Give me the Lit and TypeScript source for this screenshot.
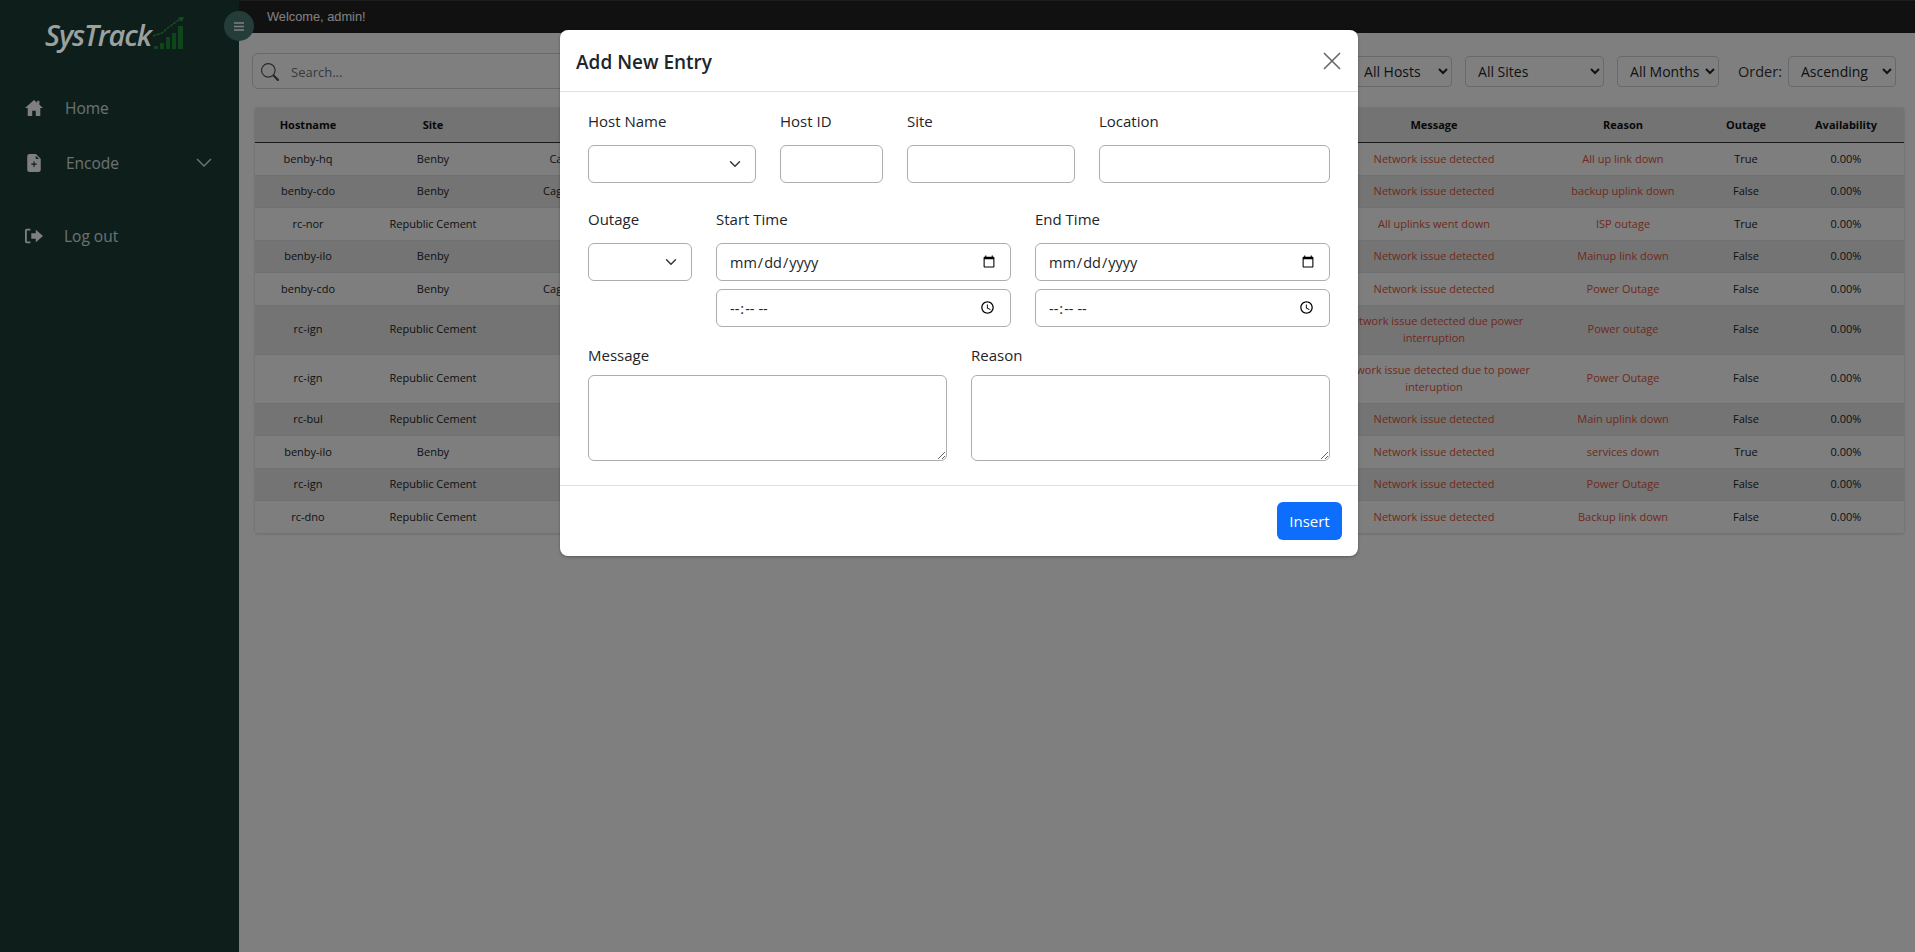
import { html, css, LitElement } from 'lit';
import { customElement } from 'lit/decorators.js';
import { map } from 'lit/directives/map.js';

interface Row {
  host: string;
  site: string;
  location: string;
  message: string;
  reason: string;
  outage: string;
}

const NET = 'Network issue detected';
const RC = 'Republic Cement';

const ROWS: Row[] = [
  { host: 'benby-hq', site: 'Benby', location: 'Caloocan City', message: NET, reason: 'All up link down', outage: 'True' },
  { host: 'benby-cdo', site: 'Benby', location: 'Cagayan de Oro', message: NET, reason: 'backup uplink down', outage: 'False' },
  { host: 'rc-nor', site: RC, location: 'Bulacan', message: 'All uplinks went down', reason: 'ISP outage', outage: 'True' },
  { host: 'benby-ilo', site: 'Benby', location: 'Iloilo', message: NET, reason: 'Mainup link down', outage: 'False' },
  { host: 'benby-cdo', site: 'Benby', location: 'Cagayan de Oro', message: NET, reason: 'Power Outage', outage: 'False' },
  { host: 'rc-ign', site: RC, location: 'Iligan', message: 'Network issue detected due power interruption', reason: 'Power outage', outage: 'False' },
  { host: 'rc-ign', site: RC, location: 'Iligan', message: 'Network issue detected due to power interuption', reason: 'Power Outage', outage: 'False' },
  { host: 'rc-bul', site: RC, location: 'Bulacan', message: NET, reason: 'Main uplink down', outage: 'False' },
  { host: 'benby-ilo', site: 'Benby', location: 'Iloilo', message: NET, reason: 'services down', outage: 'True' },
  { host: 'rc-ign', site: RC, location: 'Iligan', message: NET, reason: 'Power Outage', outage: 'False' },
  { host: 'rc-dno', site: RC, location: 'Danao', message: NET, reason: 'Backup link down', outage: 'False' },
];

const COLUMNS: [string, number][] = [
  ['Hostname', 106],
  ['Site', 144],
  ['Location', 158],
  ['Host ID', 221],
  ['Start Time', 221],
  ['End Time', 221],
  ['Message', 216],
  ['Reason', 162],
  ['Outage', 84],
  ['Availability', 116],
];

@customElement('app-root')
export class AppRoot extends LitElement {
  static styles = css`
    :host {
      display: block;
      position: relative;
      height: 100vh;
      overflow: hidden;
      font-family: "Open Sans", "Noto Sans", sans-serif;
      color: #212529;
      background: #fff;
    }

    .layout {
      display: flex;
      height: 100%;
    }

    /* sidebar */
    .sidebar {
      width: 239px;
      flex: none;
      background: #1c3d36;
      color: #fff;
      box-sizing: border-box;
      padding-top: 16px;
    }

    .logo {
      display: flex;
      align-items: flex-end;
      height: 38px;
      padding-left: 45px;
    }

    /* the logo stays brighter than the dimmed page around it */
    .logo-text {
      position: relative;
      z-index: 1;
      font-size: 29px;
      line-height: 38px;
      font-weight: 600;
      font-style: italic;
      letter-spacing: -1.1px;
      color: #9ca1a0;
    }

    .logo svg {
      margin: 0 0 5px 1px;
    }

    .menu {
      margin-top: 42px;
    }

    .menu-item {
      display: flex;
      align-items: center;
      height: 24px;
      padding-left: 25px;
      font-size: 15.5px;
      color: #d8e3e0;
    }

    .menu-item + .menu-item {
      margin-top: 31px;
    }

    .menu-item.logout {
      margin-top: 49px;
    }

    .menu-item svg.icon {
      width: 18px;
      height: 18px;
      flex: none;
      fill: #fff;
    }

    .menu-item span {
      margin-left: 22px;
    }

    .menu-item.logout span {
      margin-left: 21px;
    }

    .menu-item.encode span {
      margin-left: 23px;
    }

    .menu-item svg.chev {
      margin-left: auto;
      margin-right: 27px;
    }

    .toggle {
      position: absolute;
      left: 224px;
      top: 11px;
      width: 30px;
      height: 30px;
      border-radius: 50%;
      background: #4a7a70;
      display: flex;
      align-items: center;
      justify-content: center;
    }

    /* main */
    .main {
      flex: 1;
      min-width: 0;
      display: flex;
      flex-direction: column;
    }

    .topbar {
      height: 32px;
      flex: none;
      border-top: 1px solid #3a3a3a;
      background: #222;
      color: #fff;
      font-family: "Liberation Sans", Arial, sans-serif;
      font-size: 12.8px;
      line-height: 31px;
      padding-left: 28px;
    }

    .content {
      padding: 20px 19px 0 13px;
    }

    .toolbar {
      display: flex;
      align-items: center;
    }

    .search {
      flex: 1;
      height: 36px;
      box-sizing: border-box;
      border: 1px solid #ced4da;
      border-radius: 6px;
      display: flex;
      align-items: center;
      padding: 1px 0 0 8px;
      margin-right: 13px;
      font-size: 13px;
      color: #6c757d;
    }

    .search svg {
      width: 18px;
      height: 18px;
      fill: #555;
      margin-right: 12px;
    }

    .filter {
      height: 31px;
      box-sizing: border-box;
      border: 1px solid #ced4da;
      border-radius: 4px;
      background-color: #fff;
      font-family: inherit;
      font-size: 14px;
      color: #212529;
      padding: 0 0 0 8px;
      margin-left: 13px;
    }

    .filter.hosts { width: 101px; margin-left: 0; }
    .filter.sites { width: 139px; }
    .filter.months { width: 102px; }
    .filter.order { width: 108px; margin-left: 6px; }

    .order-label {
      margin-left: 19px;
      font-size: 14.5px;
      color: #333;
    }

    .card {
      margin: 19px -8px 0 3px;
      box-shadow: 0 0 3px rgba(0, 0, 0, 0.2);
      border-radius: 3px;
    }

    table {
      width: 100%;
      table-layout: fixed;
      border-collapse: collapse;
      font-size: 11px;
      line-height: 16.5px;
      text-align: center;
    }

    th {
      font-weight: 700;
      color: #111;
      background: #e6e6e6;
      padding: 9px 8px 8.5px;
      border-bottom: 1px solid #333;
    }

    td {
      padding: 7.5px 8px;
      background: #fcfcfc;
      border-bottom: 1px solid #dee2e6;
      vertical-align: middle;
    }

    tbody tr:nth-child(even) td {
      background: #e8e8e8;
    }

    td.alert {
      color: #e2533a;
    }

    /* modal */
    .backdrop {
      position: absolute;
      inset: 0;
      background: rgba(0, 0, 0, 0.5);
    }

    .modal {
      position: absolute;
      left: 560px;
      top: 30px;
      width: 798px;
      background: #fff;
      border-radius: 8px;
      box-shadow: 0 1px 3px rgba(0, 0, 0, 0.3);
    }

    .modal-header {
      display: flex;
      align-items: center;
      justify-content: space-between;
      height: 61px;
      padding: 0 16px;
      border-bottom: 1px solid #dee2e6;
    }

    .modal-title {
      font-size: 19px;
      font-weight: 600;
      padding-top: 2px;
    }

    .modal-body {
      padding: 18px 28px 24px 28px;
    }

    .form-row {
      display: flex;
      gap: 24px;
    }

    .form-row + .form-row {
      margin-top: 25px;
    }

    .form-row.third {
      margin-top: 17px;
    }

    .field {
      display: flex;
      flex-direction: column;
    }

    label {
      font-size: 15px;
      line-height: 22px;
      margin-bottom: 13px;
    }

    .third label {
      margin-bottom: 9px;
    }

    .w-host { width: 168px; }
    .w-id { width: 103px; }
    .w-site { width: 168px; }
    .w-loc { width: 231px; }
    .w-outage { width: 104px; }
    .w-start { width: 295px; }
    .w-end { width: 295px; }
    .w-msg { width: 359px; }
    .w-reason { width: 359px; }

    .control {
      display: block;
      width: 100%;
      height: 38px;
      box-sizing: border-box;
      border: 1px solid #adadad;
      border-radius: 6px;
      background: #fff;
      font-family: inherit;
      font-size: 14.5px;
      color: #212529;
      padding: 0 12px;
      margin: 0;
    }

    .control + .control {
      margin-top: 8px;
    }

    select.control {
      appearance: none;
      background-image: url("data:image/svg+xml,%3csvg xmlns='http://www.w3.org/2000/svg' viewBox='0 0 16 16'%3e%3cpath fill='none' stroke='%23343a40' stroke-linecap='round' stroke-linejoin='round' stroke-width='2' d='m2 5 6 6 6-6'/%3e%3c/svg%3e");
      background-repeat: no-repeat;
      background-position: right 12px center;
      background-size: 16px 12px;
    }

    textarea.control {
      height: 86px;
      padding: 6px 12px;
    }

    .modal-footer {
      display: flex;
      justify-content: flex-end;
      padding: 16px;
      border-top: 1px solid #dee2e6;
    }

    .btn {
      width: 65px;
      height: 38px;
      border: none;
      border-radius: 6px;
      background: #0d6efd;
      color: #fff;
      font-family: inherit;
      font-size: 15px;
      padding: 0;
    }
  `;

  private renderSidebar() {
    return html`
      <aside class="sidebar">
        <div class="logo">
          <span class="logo-text">SysTrack</span>
          <svg width="34" height="32" viewBox="0 0 34 32">
            <path fill="#1c8a34" d="M2 29h4v3H2zM8 26h4v6H8zM14 20h4v12h-4zM20 16h4v16h-4zM26 9h5v23h-5z" />
            <path fill="none" stroke="#2f9c44" stroke-width="1.5" stroke-dasharray="3 1" d="M1 19l9-3 7-6 11-8" />
            <path fill="#2f9c44" d="M32 0l-6 .5 3.5 4.5z" />
          </svg>
        </div>
        <nav class="menu">
          <div class="menu-item">
            <svg class="icon" viewBox="0 0 20 18"><path d="M10 0 0 9h3v9h5v-6h4v6h5V9h3l-4-3.6V1h-2.5v2.1z" /></svg>
            <span>Home</span>
          </div>
          <div class="menu-item encode">
            <svg class="icon" viewBox="0 0 16 16" style="height:22px"><path d="M9.293 0H4a2 2 0 0 0-2 2v12a2 2 0 0 0 2 2h8a2 2 0 0 0 2-2V4.707A1 1 0 0 0 13.707 4L10 .293A1 1 0 0 0 9.293 0zM9.5 3.5v-2l3 3h-2a1 1 0 0 1-1-1zM8.5 7v1.5H10a.5.5 0 0 1 0 1H8.5V11a.5.5 0 0 1-1 0V9.5H6a.5.5 0 0 1 0-1h1.5V7a.5.5 0 0 1 1 0z" /></svg>
            <span>Encode</span>
            <svg class="chev" width="16" height="10" viewBox="0 0 16 10"><path d="M1 1l7 7 7-7" fill="none" stroke="#d8e3e0" stroke-width="1.5" /></svg>
          </div>
          <div class="menu-item logout">
            <svg class="icon" viewBox="0 0 20 16"><path d="M6 0H2a2 2 0 0 0-2 2v12a2 2 0 0 0 2 2h4v-2H2V2h4zM7 5h5V1l8 7-8 7v-4H7z" /></svg>
            <span>Log out</span>
          </div>
        </nav>
      </aside>
    `;
  }

  private renderTable() {
    return html`
      <div class="card">
        <table>
          <colgroup>
            ${map(COLUMNS, ([, width]) => html`<col style="width:${width}px" />`)}
          </colgroup>
          <thead>
            <tr>${map(COLUMNS, ([name]) => html`<th>${name}</th>`)}</tr>
          </thead>
          <tbody>
            ${map(ROWS, row => html`
              <tr>
                <td>${row.host}</td>
                <td>${row.site}</td>
                <td>${row.location}</td>
                <td></td>
                <td></td>
                <td></td>
                <td class="alert">${row.message}</td>
                <td class="alert">${row.reason}</td>
                <td>${row.outage}</td>
                <td>0.00%</td>
              </tr>
            `)}
          </tbody>
        </table>
      </div>
    `;
  }

  private renderModal() {
    return html`
      <div class="backdrop"></div>
      <div class="modal">
        <div class="modal-header">
          <div class="modal-title">Add New Entry</div>
          <svg width="20" height="20" viewBox="0 0 20 20"><path d="M2 2l16 16M18 2L2 18" stroke="#666" stroke-width="1.6" fill="none" /></svg>
        </div>
        <div class="modal-body">
          <div class="form-row">
            <div class="field w-host"><label>Host Name</label><select class="control"></select></div>
            <div class="field w-id"><label>Host ID</label><input class="control" /></div>
            <div class="field w-site"><label>Site</label><input class="control" /></div>
            <div class="field w-loc"><label>Location</label><input class="control" /></div>
          </div>
          <div class="form-row">
            <div class="field w-outage"><label>Outage</label><select class="control"></select></div>
            <div class="field w-start">
              <label>Start Time</label>
              <input class="control" type="date" />
              <input class="control" type="time" />
            </div>
            <div class="field w-end">
              <label>End Time</label>
              <input class="control" type="date" />
              <input class="control" type="time" />
            </div>
          </div>
          <div class="form-row third">
            <div class="field w-msg"><label>Message</label><textarea class="control"></textarea></div>
            <div class="field w-reason"><label>Reason</label><textarea class="control"></textarea></div>
          </div>
        </div>
        <div class="modal-footer">
          <button class="btn">Insert</button>
        </div>
      </div>
    `;
  }

  render() {
    return html`
      <div class="layout">
        ${this.renderSidebar()}
        <div class="main">
          <div class="topbar">Welcome, admin!</div>
          <div class="content">
            <div class="toolbar">
              <div class="search">
                <svg viewBox="0 0 16 16"><path d="M11.742 10.344a6.5 6.5 0 1 0-1.397 1.398h-.001c.03.04.062.078.098.115l3.85 3.85a1 1 0 0 0 1.415-1.414l-3.85-3.85a1.007 1.007 0 0 0-.115-.1zM12 6.5a5.5 5.5 0 1 1-11 0 5.5 5.5 0 0 1 11 0z" /></svg>
                Search...
              </div>
              <select class="filter hosts"><option>All Hosts</option></select>
              <select class="filter sites"><option>All Sites</option></select>
              <select class="filter months"><option>All Months</option></select>
              <span class="order-label">Order:</span>
              <select class="filter order"><option>Ascending</option></select>
            </div>
            ${this.renderTable()}
          </div>
        </div>
      </div>
      <div class="toggle">
        <svg width="10" height="9" viewBox="0 0 10 9"><path d="M0 1h10M0 4.5h10M0 8h10" stroke="#fff" stroke-width="1.4" /></svg>
      </div>
      ${this.renderModal()}
    `;
  }
}
